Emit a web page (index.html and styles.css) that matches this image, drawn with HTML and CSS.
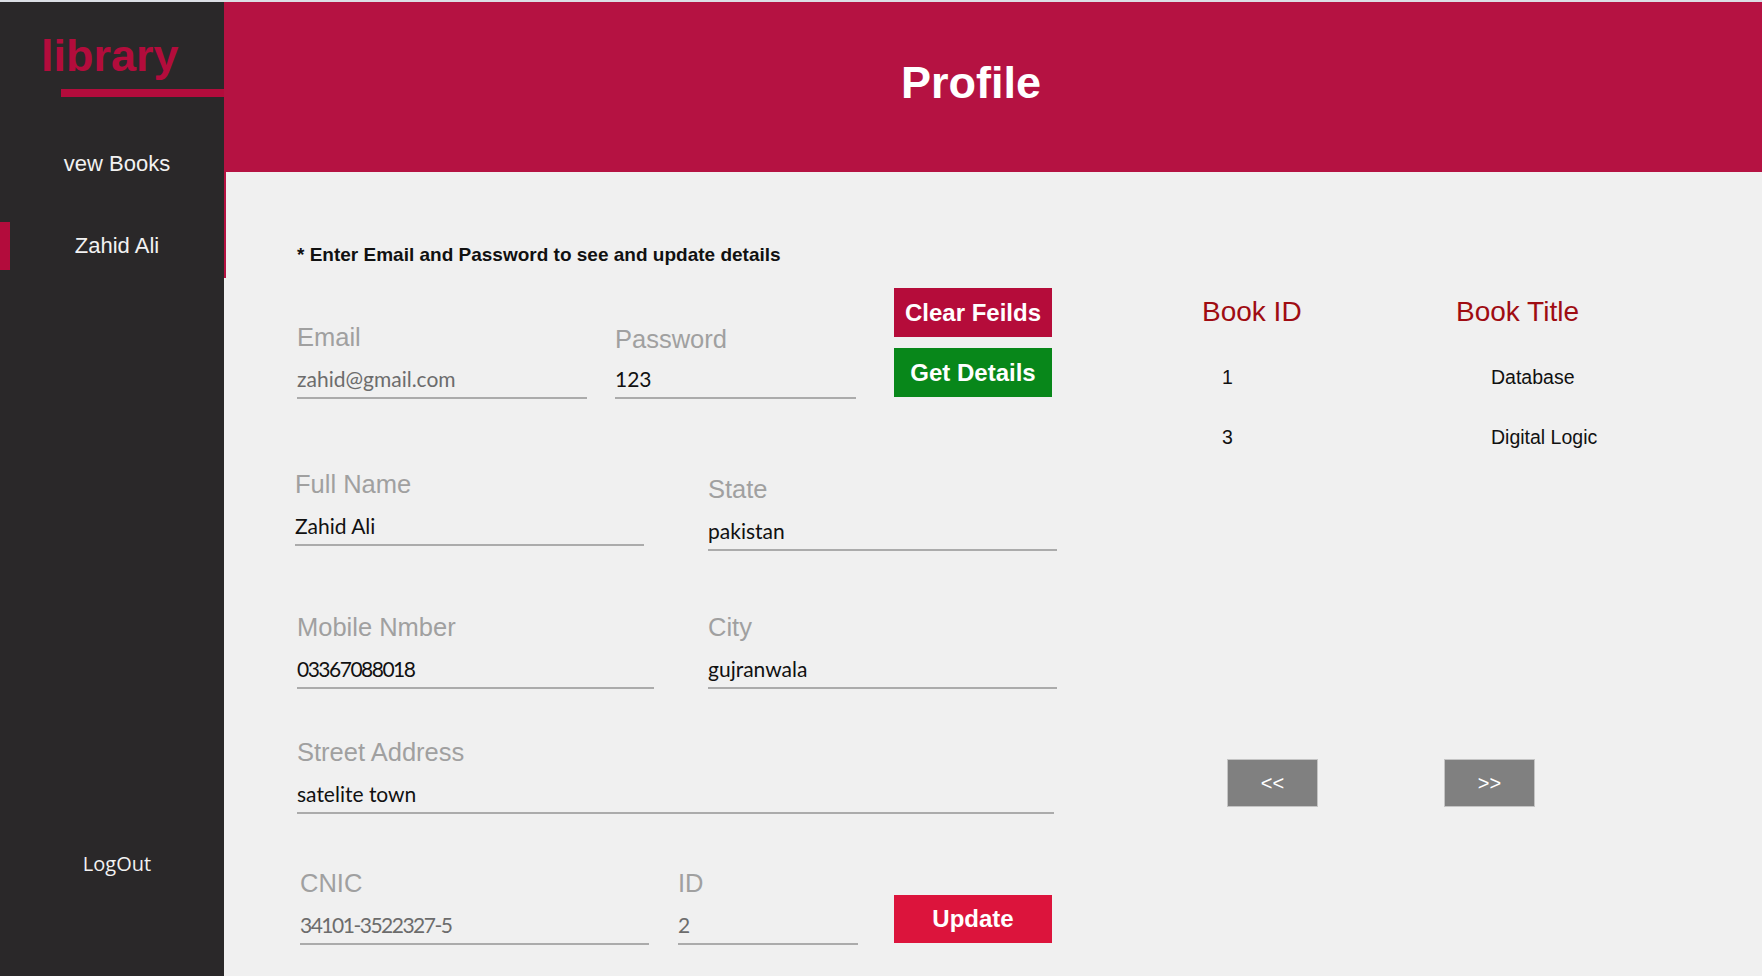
FILE: index.html
```html
<!DOCTYPE html>
<html lang="en">
<head>
<meta charset="utf-8">
<title>Profile</title>
<link rel="stylesheet" href="styles.css">
</head>
<body>
<div class="topstrip"></div>
<div class="app">
  <aside class="sidebar">
    <div class="logo">library</div>
    <div class="logo-bar"></div>
    <nav class="nav">
      <div class="nav-item">vew Books</div>
      <div class="nav-item active">Zahid Ali</div>
    </nav>
    <div class="nav-item logout">LogOut</div>
  </aside>
  <main class="main">
    <header class="header"><h1 class="title">Profile</h1></header>
    <section class="content">
      <div class="form">
        <p class="hint">* Enter Email and Password to see and update details</p>
        <div class="row row-1">
          <div class="field f-email">
            <div class="label">Email</div>
            <div class="value muted">zahid@gmail.com</div>
          </div>
          <div class="field f-pass">
            <div class="label">Password</div>
            <div class="value">123</div>
          </div>
          <div class="btn-col">
            <button class="btn btn-clear">Clear Feilds</button>
            <button class="btn btn-get">Get Details</button>
          </div>
        </div>
        <div class="row row-2">
          <div class="field f-name">
            <div class="label">Full Name</div>
            <div class="value">Zahid Ali</div>
          </div>
          <div class="field f-state">
            <div class="label">State</div>
            <div class="value">pakistan</div>
          </div>
        </div>
        <div class="row row-3">
          <div class="field f-mobile">
            <div class="label">Mobile Nmber</div>
            <div class="value num">03367088018</div>
          </div>
          <div class="field f-city">
            <div class="label">City</div>
            <div class="value">gujranwala</div>
          </div>
        </div>
        <div class="row row-4">
          <div class="field f-street">
            <div class="label">Street Address</div>
            <div class="value">satelite town</div>
          </div>
        </div>
        <div class="row row-5">
          <div class="field f-cnic">
            <div class="label">CNIC</div>
            <div class="value muted num">34101-3522327-5</div>
          </div>
          <div class="field f-id">
            <div class="label">ID</div>
            <div class="value muted">2</div>
          </div>
          <button class="btn btn-update">Update</button>
        </div>
      </div>
      <div class="books">
        <div class="book-table">
          <div class="th">Book ID</div>
          <div class="th">Book Title</div>
          <div class="td td-id">1</div>
          <div class="td td-name">Database</div>
          <div class="td td-id">3</div>
          <div class="td td-name">Digital Logic</div>
        </div>
        <div class="pager">
          <button class="pg">&lt;&lt;</button>
          <button class="pg">&gt;&gt;</button>
        </div>
      </div>
    </section>
  </main>
</div>
</body>
</html>
```
FILE: styles.css
```css
* { box-sizing: border-box; }
html, body { margin: 0; padding: 0; }
body {
  width: 1762px;
  height: 976px;
  overflow: hidden;
  background: #f0f0f0;
  font-family: "Liberation Sans", Arial, sans-serif;
}
.topstrip { height: 2px; background: #dcdfe5; }
.app { display: flex; height: 974px; }

/* sidebar */
.sidebar {
  width: 224px;
  flex: none;
  background: #2a2829;
  display: flex;
  flex-direction: column;
  padding-bottom: 88px;
}
.logo {
  padding: 28px 0 0 41px;
  font-weight: bold;
  font-size: 45px;
  line-height: 52px;
  color: #b30c3c;
}
.logo-bar { margin: 7px 0 0 61px; height: 8px; background: #b30c3c; }
.nav { display: flex; flex-direction: column; gap: 34px; margin-top: 43px; }
.nav-item {
  height: 48px;
  border-left: 10px solid transparent;
  display: flex;
  align-items: center;
  justify-content: center;
  color: #f2f2f2;
  font-size: 22px;
  line-height: 26px;
}
.nav-item.active { border-left-color: #b30c3c; }
.logout { margin-top: auto; font-family: "Open Sans", sans-serif; font-size: 20px; }

/* main */
.main { flex: 1; display: flex; flex-direction: column; }
.header { height: 170px; background: #b51242; padding: 55px 0 0 677px; }
.title { margin: 0; font-size: 45px; line-height: 52px; font-weight: bold; color: #fff; }
.content { position: relative; flex: 1; display: flex; }
.content::before {
  content: "";
  position: absolute;
  left: 0;
  top: 0;
  width: 2px;
  height: 106px;
  background: #b51242;
}

/* form */
.form { width: 833px; flex: none; padding: 72px 0 0 73px; }
.hint { margin: 0; font-weight: bold; font-size: 19px; line-height: 22px; color: #111; }
.row { display: flex; align-items: flex-start; }
.label {
  font-size: 25.5px;
  line-height: 30px;
  color: #a0a0a0;
  margin-bottom: 13px;
}
.value {
  font-family: Lato, "Open Sans", sans-serif;
  font-size: 21px;
  line-height: 28px;
  padding-bottom: 4px;
  border-bottom: 2px solid #ababab;
  color: #111;
}
.value.muted { color: #6c6c6c; }
.value.num { letter-spacing: -1.5px; }

.row-1 { margin-top: 22px; }
.f-email { width: 290px; margin-top: 34px; }
.f-pass { width: 241px; margin-left: 28px; margin-top: 34px; }
.f-pass .label { padding-top: 2px; margin-bottom: 11px; }
.btn-col { margin-left: 38px; display: flex; flex-direction: column; gap: 11px; }

.row-2 { margin-top: 70px; }
.f-name { width: 349px; margin-left: -2px; }
.f-state { width: 349px; margin-left: 64px; margin-top: 5px; }

.row-3 { margin-top: 61px; }
.f-mobile { width: 357px; }
.f-city { width: 349px; margin-left: 54px; }

.row-4 { margin-top: 48px; }
.f-street { width: 757px; }

.row-5 { margin-top: 54px; }
.f-cnic { width: 349px; margin-left: 3px; }
.f-id { width: 180px; margin-left: 29px; }

.btn {
  width: 158px;
  height: 49px;
  border: 0;
  padding: 0;
  color: #fff;
  font-family: "Liberation Sans", Arial, sans-serif;
  font-weight: bold;
  font-size: 24px;
}
.btn-clear { background: #b50c3a; }
.btn-get { background: #08871a; }
.btn-update { background: #dc143c; height: 48px; margin-left: 36px; margin-top: 27px; }

/* books */
.books { margin-left: 145px; padding-top: 123px; }
.book-table { display: grid; grid-template-columns: 254px auto; row-gap: 36px; }
.th { font-size: 28px; line-height: 34px; color: #9f0c12; }
.td { font-size: 19.5px; line-height: 24px; color: #111; }
.td-id { padding-left: 20px; }
.td-name { padding-left: 35px; }
.pager { display: flex; gap: 126px; margin: 310px 0 0 25px; }
.pg {
  width: 91px;
  height: 48px;
  padding: 0;
  background: #808080;
  border: 1px solid #c4c4c4;
  color: #fff;
  font-family: "Liberation Sans", Arial, sans-serif;
  font-size: 20px;
}
```
